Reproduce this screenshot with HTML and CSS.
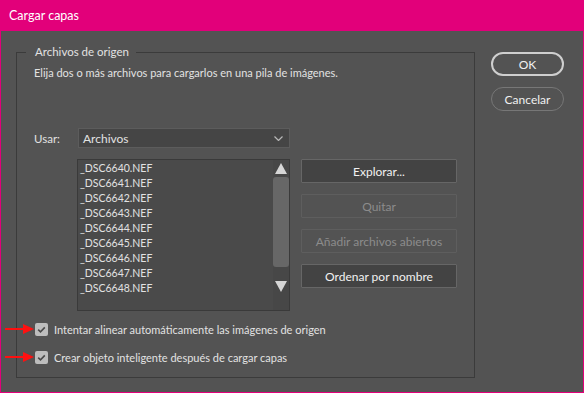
FILE: index.html
```html
<!DOCTYPE html>
<html lang="es">
<head>
    <meta charset="UTF-8">
    <title>Cargar capas</title>
    <link rel="stylesheet" href="styles.css">
</head>
<body>
    <div class="window">
        <div class="titlebar">Cargar capas</div>
        <div class="content">
            <fieldset class="source">
                <legend>Archivos de origen</legend>
                <p class="hint">Elija dos o más archivos para cargarlos en una pila de imágenes.</p>

                <div class="use-row">
                    <span class="use-label">Usar:</span>
                    <div class="select">
                        <span>Archivos</span>
                        <svg class="chevron" width="9" height="5" viewBox="0 0 9 5"><path d="M0.5 0.5 L4.5 4.5 L8.5 0.5" fill="none" stroke="#b8b8b8" stroke-width="1.2"/></svg>
                    </div>
                </div>

                <div class="files-row">
                    <div class="listbox">
                        <ul class="files">
                            <li>_DSC6640.NEF</li>
                            <li>_DSC6641.NEF</li>
                            <li>_DSC6642.NEF</li>
                            <li>_DSC6643.NEF</li>
                            <li>_DSC6644.NEF</li>
                            <li>_DSC6645.NEF</li>
                            <li>_DSC6646.NEF</li>
                            <li>_DSC6647.NEF</li>
                            <li>_DSC6648.NEF</li>
                        </ul>
                        <div class="scrollbar">
                            <svg class="arrow-up" width="12" height="11" viewBox="0 0 12 11"><path d="M6 0 L12 11 L0 11 Z" fill="#d6d6d6"/></svg>
                            <div class="thumb"></div>
                            <svg class="arrow-down" width="12" height="11" viewBox="0 0 12 11"><path d="M0 0 L12 0 L6 11 Z" fill="#d6d6d6"/></svg>
                        </div>
                    </div>
                    <div class="file-actions">
                        <button class="btn">Explorar...</button>
                        <button class="btn" disabled>Quitar</button>
                        <button class="btn" disabled>Añadir archivos abiertos</button>
                        <button class="btn">Ordenar por nombre</button>
                    </div>
                </div>

                <div class="checks">
                    <label class="check">
                        <svg class="pointer" width="30" height="12" viewBox="0 0 30 12"><path d="M0 6 H20" stroke="#ff1010" stroke-width="2"/><path d="M18 1 L29 6 L18 11 Z" fill="#ff1010"/></svg>
                        <span class="box"><svg width="13" height="13" viewBox="0 0 13 13"><path d="M3.2 6.6 L5.5 8.8 L9.8 4.4" fill="none" stroke="#4a4a4a" stroke-width="1.6"/></svg></span>
                        Intentar alinear automáticamente las imágenes de origen
                    </label>
                    <label class="check">
                        <svg class="pointer" width="30" height="12" viewBox="0 0 30 12"><path d="M0 6 H20" stroke="#ff1010" stroke-width="2"/><path d="M18 1 L29 6 L18 11 Z" fill="#ff1010"/></svg>
                        <span class="box"><svg width="13" height="13" viewBox="0 0 13 13"><path d="M3.2 6.6 L5.5 8.8 L9.8 4.4" fill="none" stroke="#4a4a4a" stroke-width="1.6"/></svg></span>
                        Crear objeto inteligente después de cargar capas
                    </label>
                </div>
            </fieldset>

            <div class="actions">
                <button class="pill primary">OK</button>
                <button class="pill">Cancelar</button>
            </div>
        </div>
    </div>
</body>
</html>
```

FILE: styles.css
```css
body {
    margin: 0;
    font-family: Lato, "Open Sans", Arial, sans-serif;
    font-size: 11px;
    color: #e2e2e2;
    background-color: #535353;
}
.window {
    width: 584px;
    height: 393px;
    box-sizing: border-box;
    background-color: #535353;
    border: 1px solid #e2007a;
    border-top: none;
    display: flex;
    flex-direction: column;
}
.titlebar {
    height: 31px;
    flex-shrink: 0;
    margin: 0 -1px;
    padding-left: 9px;
    background-color: #e2007a;
    color: #fff;
    font-size: 12.5px;
    line-height: 31px;
}
.content {
    display: flex;
    gap: 16px;
    padding: 13px 0 0 15px;
}
.source {
    width: 459px;
    box-sizing: border-box;
    margin: 0;
    padding: 0 17px 10px;
    border: 1px solid #3b3b3b;
    min-inline-size: 0;
}
.source legend {
    padding: 0 7px 0 9px;
    margin-left: -8px;
    line-height: 16px;
    font-size: 11.5px;
}
.hint {
    margin: 5px 0 0;
    line-height: 16px;
}
.use-row {
    display: flex;
    align-items: center;
    margin-top: 47px;
}
.use-label {
    width: 44px;
    font-size: 11.5px;
}
.select {
    width: 212px;
    height: 20px;
    box-sizing: border-box;
    display: flex;
    align-items: center;
    justify-content: space-between;
    padding: 0 6px 0 4px;
    background-color: #454545;
    border: 1px solid #5c5c5c;
    font-size: 12px;
}
.files-row {
    display: flex;
    gap: 11px;
    margin: 11px 0 0 43px;
}
.listbox {
    width: 213px;
    height: 152px;
    box-sizing: border-box;
    display: flex;
    background-color: #4a4a4a;
    border: 1px solid #3a3a3a;
}
.files {
    flex: 1;
    list-style: none;
    margin: 0;
    padding: 1px 0 0 2px;
    line-height: 15px;
    font-size: 10.5px;
}
.scrollbar {
    width: 16px;
    display: flex;
    flex-direction: column;
    align-items: center;
    background-color: #474747;
}
.arrow-up {
    margin-top: 3px;
}
.thumb {
    width: 16px;
    height: 90px;
    margin-top: 3px;
    background-color: #676767;
    border-radius: 3px;
}
.arrow-down {
    margin-top: 14px;
}
.file-actions {
    display: flex;
    flex-direction: column;
    gap: 11px;
}
.btn {
    width: 156px;
    height: 24px;
    box-sizing: border-box;
    font-family: inherit;
    font-size: 12px;
    color: #f2f2f2;
    background-color: #434343;
    border: 1px solid #666;
    border-radius: 1px;
    padding: 0;
}
.btn:disabled {
    color: #8c8c8c;
    background-color: #535353;
    border-color: #5e5e5e;
}
.checks {
    display: flex;
    flex-direction: column;
    gap: 8px;
    margin-top: 8px;
}
.check {
    position: relative;
    display: flex;
    align-items: center;
    gap: 6px;
    height: 20px;
    margin-left: 1px;
    font-size: 11px;
}
.pointer {
    position: absolute;
    left: -30px;
    top: 4px;
}
.box {
    width: 13px;
    height: 13px;
    border-radius: 2px;
    background-color: #bdbdbd;
    display: flex;
}
.actions {
    display: flex;
    flex-direction: column;
    gap: 11px;
    padding-top: 8px;
}
.pill {
    width: 73px;
    height: 24px;
    box-sizing: border-box;
    font-family: inherit;
    font-size: 12px;
    color: #f0f0f0;
    background-color: transparent;
    border: 1px solid #777;
    border-radius: 12px;
    padding: 0;
}
.pill.primary {
    border: 2px solid #cfcfcf;
}
```
